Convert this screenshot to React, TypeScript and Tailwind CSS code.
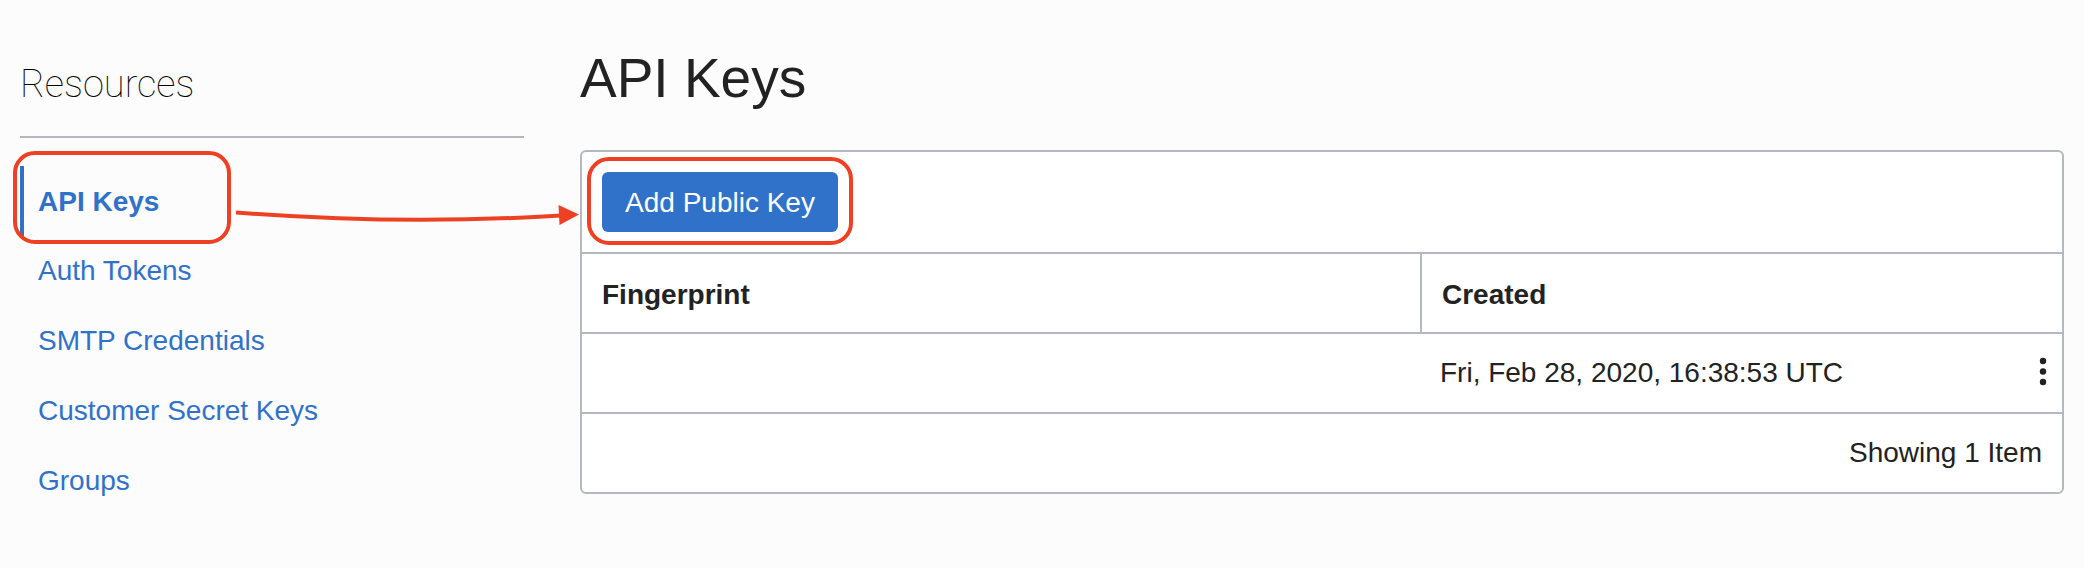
import React from "react";

const otherResources = ["Auth Tokens", "SMTP Credentials", "Customer Secret Keys", "Groups"];

function Highlight({ className }: { className: string }) {
  return (
    <span
      aria-hidden="true"
      className={`pointer-events-none absolute border-4 border-[#ee4023] ${className}`}
    />
  );
}

function Arrow() {
  return (
    <svg
      aria-hidden="true"
      className="pointer-events-none absolute top-9 left-54 h-8 w-86"
      viewBox="0 0 344 32"
      fill="none"
    >
      <path d="M0 10.5 Q166 23.5 325 13.5" stroke="#ee4023" strokeWidth="4" />
      <path d="M322.5 3 L343 12.5 L323.5 23 Z" fill="#ee4023" />
    </svg>
  );
}

function Sidebar() {
  return (
    <aside className="w-[504px] shrink-0">
      <h2 className="mb-[30px] pt-[62px] text-[38px] leading-11 font-thin text-black [font-family:Roboto,sans-serif]">
        Resources
      </h2>
      <nav aria-label="Resources" className="border-t-2 border-[#b4b9c0] pt-7 text-[28px] leading-8 text-[#3072c9]">
        <ul>
          <li className="relative">
            <a
              href="#api-keys"
              aria-current="page"
              className="flex h-[70px] items-center border-l-4 border-[#3072c9] pt-0.5 pl-3.5 font-bold"
            >
              API Keys
            </a>
            <Highlight className="-top-[15px] -left-[7px] h-[93px] w-[218px] rounded-[22px]" />
            <Arrow />
          </li>
          {otherResources.map((name) => (
            <li key={name}>
              <a
                href={`#${name.toLowerCase().replace(/ /g, "-")}`}
                className="flex h-[70px] items-center pl-[18px]"
              >
                {name}
              </a>
            </li>
          ))}
        </ul>
      </nav>
    </aside>
  );
}

function KeysPanel() {
  return (
    <section className="overflow-hidden rounded-md border-2 border-[#b4b9c0] bg-white">
      <div className="flex border-b-2 border-[#b4b9c0] p-5">
        <div className="relative">
          <button type="button" className="h-15 min-w-[236px] rounded-md bg-[#3072c9] px-5 pt-0.5 text-white">
            Add Public Key
          </button>
          <Highlight className="-inset-x-[15px] -top-[15px] -bottom-[13px] rounded-[22px]" />
        </div>
      </div>
      <table className="w-full table-fixed border-separate border-spacing-0 text-left">
        <colgroup>
          <col />
          <col className="w-[562px]" />
          <col className="w-20" />
        </colgroup>
        <thead>
          <tr className="h-20">
            <th scope="col" className="border-b-2 border-[#b4b9c0] px-5 pt-1 pb-0 font-bold">
              Fingerprint
            </th>
            <th scope="col" colSpan={2} className="border-b-2 border-l-2 border-[#b4b9c0] px-5 pt-1 pb-0 font-bold">
              Created
            </th>
          </tr>
        </thead>
        <tbody>
          <tr className="h-20">
            <td className="border-b-2 border-[#b4b9c0] p-0" />
            <td className="border-b-2 border-[#b4b9c0] px-5 py-0">Fri, Feb 28, 2020, 16:38:53 UTC</td>
            <td className="border-b-2 border-[#b4b9c0] p-0">
              <button type="button" aria-label="Actions" className="ml-auto flex h-10 w-[38px] items-center justify-center">
                <svg className="h-8 w-2" viewBox="0 0 8 32" fill="#222" aria-hidden="true">
                  <circle cx="4" cy="4" r="3.2" />
                  <circle cx="4" cy="14.5" r="3.2" />
                  <circle cx="4" cy="25" r="3.2" />
                </svg>
              </button>
            </td>
          </tr>
        </tbody>
      </table>
      <p className="flex h-[78px] items-center justify-end px-5">Showing 1 Item</p>
    </section>
  );
}

export default function App() {
  return (
    <div className="flex min-h-screen gap-14 bg-[#fcfcfc] px-5 pb-18 font-['Liberation_Sans',Arial,sans-serif] text-[28px] leading-8 text-[#222]">
      <Sidebar />
      <main className="min-w-0 flex-1">
        <h1 className="mb-10 pt-[46px] text-[55px] leading-16">API Keys</h1>
        <KeysPanel />
      </main>
    </div>
  );
}
